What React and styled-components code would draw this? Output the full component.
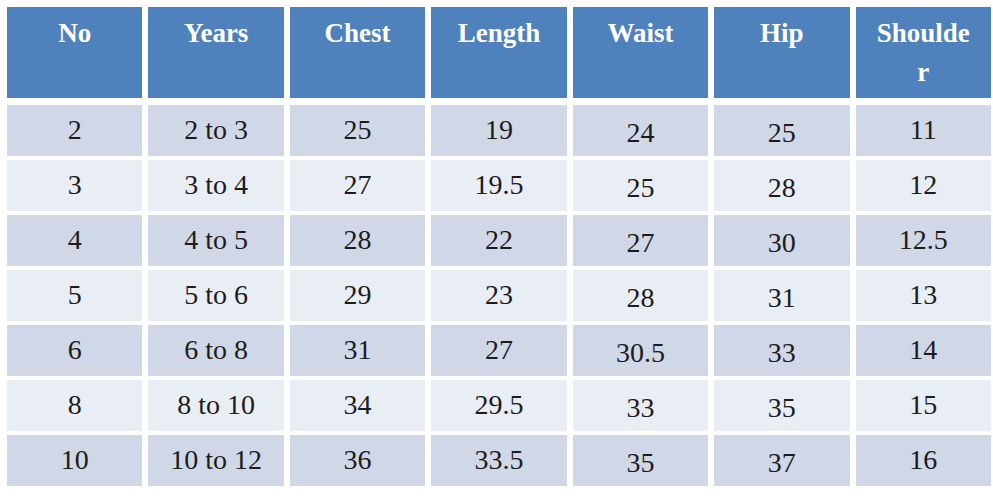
import React from "react";
import styled, { createGlobalStyle } from "styled-components";

const Global = createGlobalStyle`
  html, body { margin: 0; padding: 0; background: #ffffff; }
  body { font-family: "Liberation Serif", "Times New Roman", serif; }
`;

const Page = styled.div`
  width: 993px;
  height: 500px;
  box-sizing: border-box;
  padding: 7px 2px 0 7px;
  background: #ffffff;
`;

const Grid = styled.div`
  display: grid;
  grid-template-columns: repeat(7, 1fr);
  grid-template-rows: 94px repeat(7, 51px);
  column-gap: 6px;
  row-gap: 4px;
`;

const HeaderCell = styled.div`
  align-self: start;
  background: #4f81bd;
  color: #ffffff;
  font-family: "Liberation Serif", "Times New Roman", serif;
  font-weight: bold;
  font-size: 27px;
  line-height: 39px;
  text-align: center;
  padding-top: 7px;
  box-sizing: border-box;
  height: 91px;
`;

const Cell = styled.div`
  background: ${(p) => (p.$alt ? "#e9edf4" : "#d0d8e8")};
  color: #1c1c1c;
  font-family: "Liberation Serif", "Times New Roman", serif;
  font-size: 28px;
  line-height: 50px;
  text-align: center;
  padding-top: ${(p) => (p.$shift ? "3px" : "0")};
  box-sizing: border-box;
`;

const headers = ["No", "Years", "Chest", "Length", "Waist", "Hip", null];

const rows = [
  ["2", "2 to 3", "25", "19", "24", "25", "11"],
  ["3", "3 to 4", "27", "19.5", "25", "28", "12"],
  ["4", "4 to 5", "28", "22", "27", "30", "12.5"],
  ["5", "5 to 6", "29", "23", "28", "31", "13"],
  ["6", "6 to 8", "31", "27", "30.5", "33", "14"],
  ["8", "8 to 10", "34", "29.5", "33", "35", "15"],
  ["10", "10 to 12", "36", "33.5", "35", "37", "16"],
];

export default function App() {
  return (
    <>
      <Global />
      <Page>
        <Grid>
          {headers.map((h, i) => (
            <HeaderCell key={"h" + i}>
              {h === null ? (
                <>
                  Shoulde
                  <br />r
                </>
              ) : (
                h
              )}
            </HeaderCell>
          ))}
          {rows.map((r, ri) =>
            r.map((v, ci) => (
              <Cell key={ri + "-" + ci} $alt={ri % 2 === 1} $shift={ci === 4 || ci === 5}>
                {v}
              </Cell>
            ))
          )}
        </Grid>
      </Page>
    </>
  );
}
